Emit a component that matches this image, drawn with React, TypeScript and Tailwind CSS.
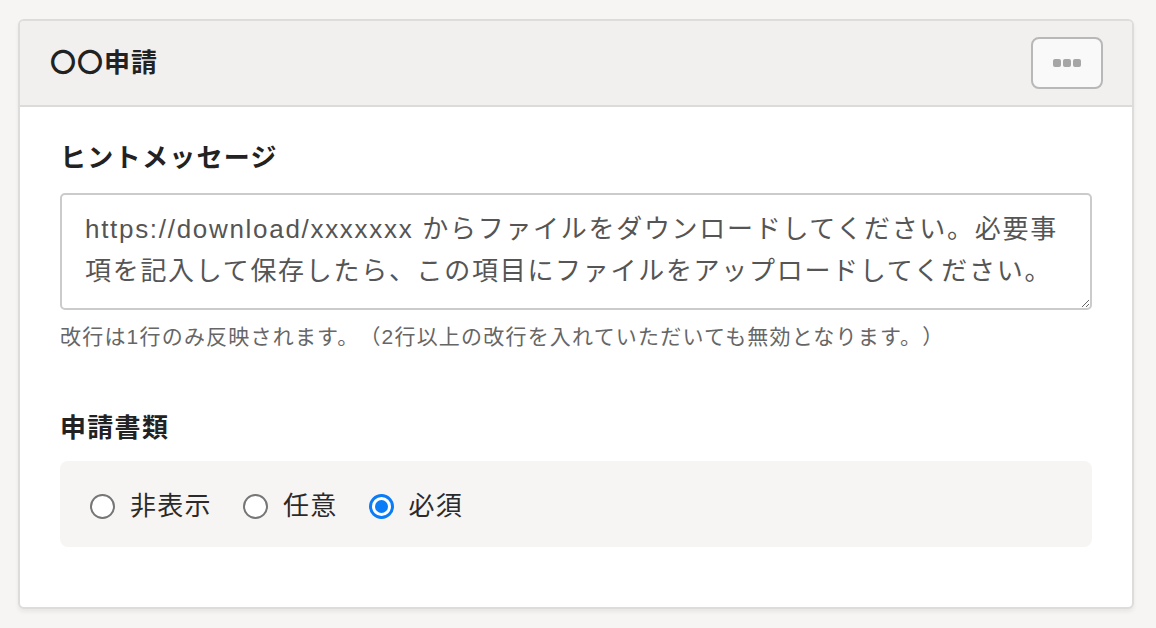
import React from 'react';

const font = { fontFamily: '"Liberation Sans", "Noto Sans CJK JP", sans-serif' };

const options = [
  { id: 'hidden', label: '非表示' },
  { id: 'optional', label: '任意' },
  { id: 'required', label: '必須' },
];

export default function App() {
  const [value, setValue] = React.useState('required');
  const [hint, setHint] = React.useState(
    'https://download/xxxxxxx からファイルをダウンロードしてください。必要事項を記入して保存したら、この項目にファイルをアップロードしてください。'
  );

  return (
    <div className="min-h-[628px] bg-[#f6f5f4] pt-[19px] px-[18px] [text-spacing-trim:space-all]" style={font}>
      <div className="w-[1116px] rounded-[6px] border-2 border-[#dddcdb] bg-white shadow-[0_3px_4px_rgba(0,0,0,0.06)] overflow-hidden">
        {/* Header */}
        <div className="flex h-[86px] items-center justify-between border-b-2 border-[#dcdbda] bg-[#f1f0ef] pl-[30px] pr-[29px]">
          <h2 className="text-[26px] font-bold tracking-[1px] text-[#222]">〇〇申請</h2>
          <button className="flex h-[52px] w-[72px] items-center justify-center gap-[2px] rounded-[8px] border-2 border-[#b8b8b8] bg-[#f9f9f9]">
            <span className="h-[8px] w-[8px] rounded-[2px] bg-[#a6a6a6]" />
            <span className="h-[8px] w-[8px] rounded-[2px] bg-[#a6a6a6]" />
            <span className="h-[8px] w-[8px] rounded-[2px] bg-[#a6a6a6]" />
          </button>
        </div>

        {/* Body */}
        <div className="px-[40px] pt-[33px] pb-[60px]">
          <div className="h-[36px] text-[26px] leading-[36px] font-bold tracking-[1.3px] text-[#222]">
            ヒントメッセージ
          </div>
          <textarea
            value={hint}
            onChange={(e) => setHint(e.target.value)}
            className="mt-[17px] block h-[117px] w-full rounded-[5px] border-2 border-[#cbcbcb] pl-[23px] pr-[26px] pt-[13px] pb-[16px] text-[26px] leading-[42px] tracking-[1.7px] text-[#555] outline-none [text-spacing-trim:space-all]"
            style={font}
          />
          <p className="mt-[12px] h-[30px] text-[21px] leading-[30px] tracking-[1.2px] text-[#666]">
            改行は1行のみ反映されます。（2行以上の改行を入れていただいても無効となります。）
          </p>

          <div className="mt-[58px] h-[36px] text-[26px] leading-[36px] font-bold tracking-[1.3px] text-[#222]">
            申請書類
          </div>
          <div className="mt-[15px] flex h-[86px] items-center gap-[31px] rounded-[8px] bg-[#f6f5f4] px-[30px] pt-[4px]">
            {options.map((o) => {
              const checked = value === o.id;
              return (
                <label key={o.id} className="flex cursor-pointer items-center gap-[15px]">
                  <input
                    type="radio"
                    name="docs"
                    checked={checked}
                    onChange={() => setValue(o.id)}
                    className="sr-only"
                  />
                  {checked ? (
                    <span className="flex h-[25px] w-[25px] items-center justify-center rounded-full border-[3px] border-[#0a7cf8] bg-white">
                      <span className="h-[13px] w-[13px] rounded-full bg-[#0a7cf8]" />
                    </span>
                  ) : (
                    <span className="h-[25px] w-[25px] rounded-full border-2 border-[#767676] bg-white" />
                  )}
                  <span className="text-[26px] leading-[36px] tracking-[1.3px] text-[#2a2a2a]">{o.label}</span>
                </label>
              );
            })}
          </div>
        </div>
      </div>
    </div>
  );
}
